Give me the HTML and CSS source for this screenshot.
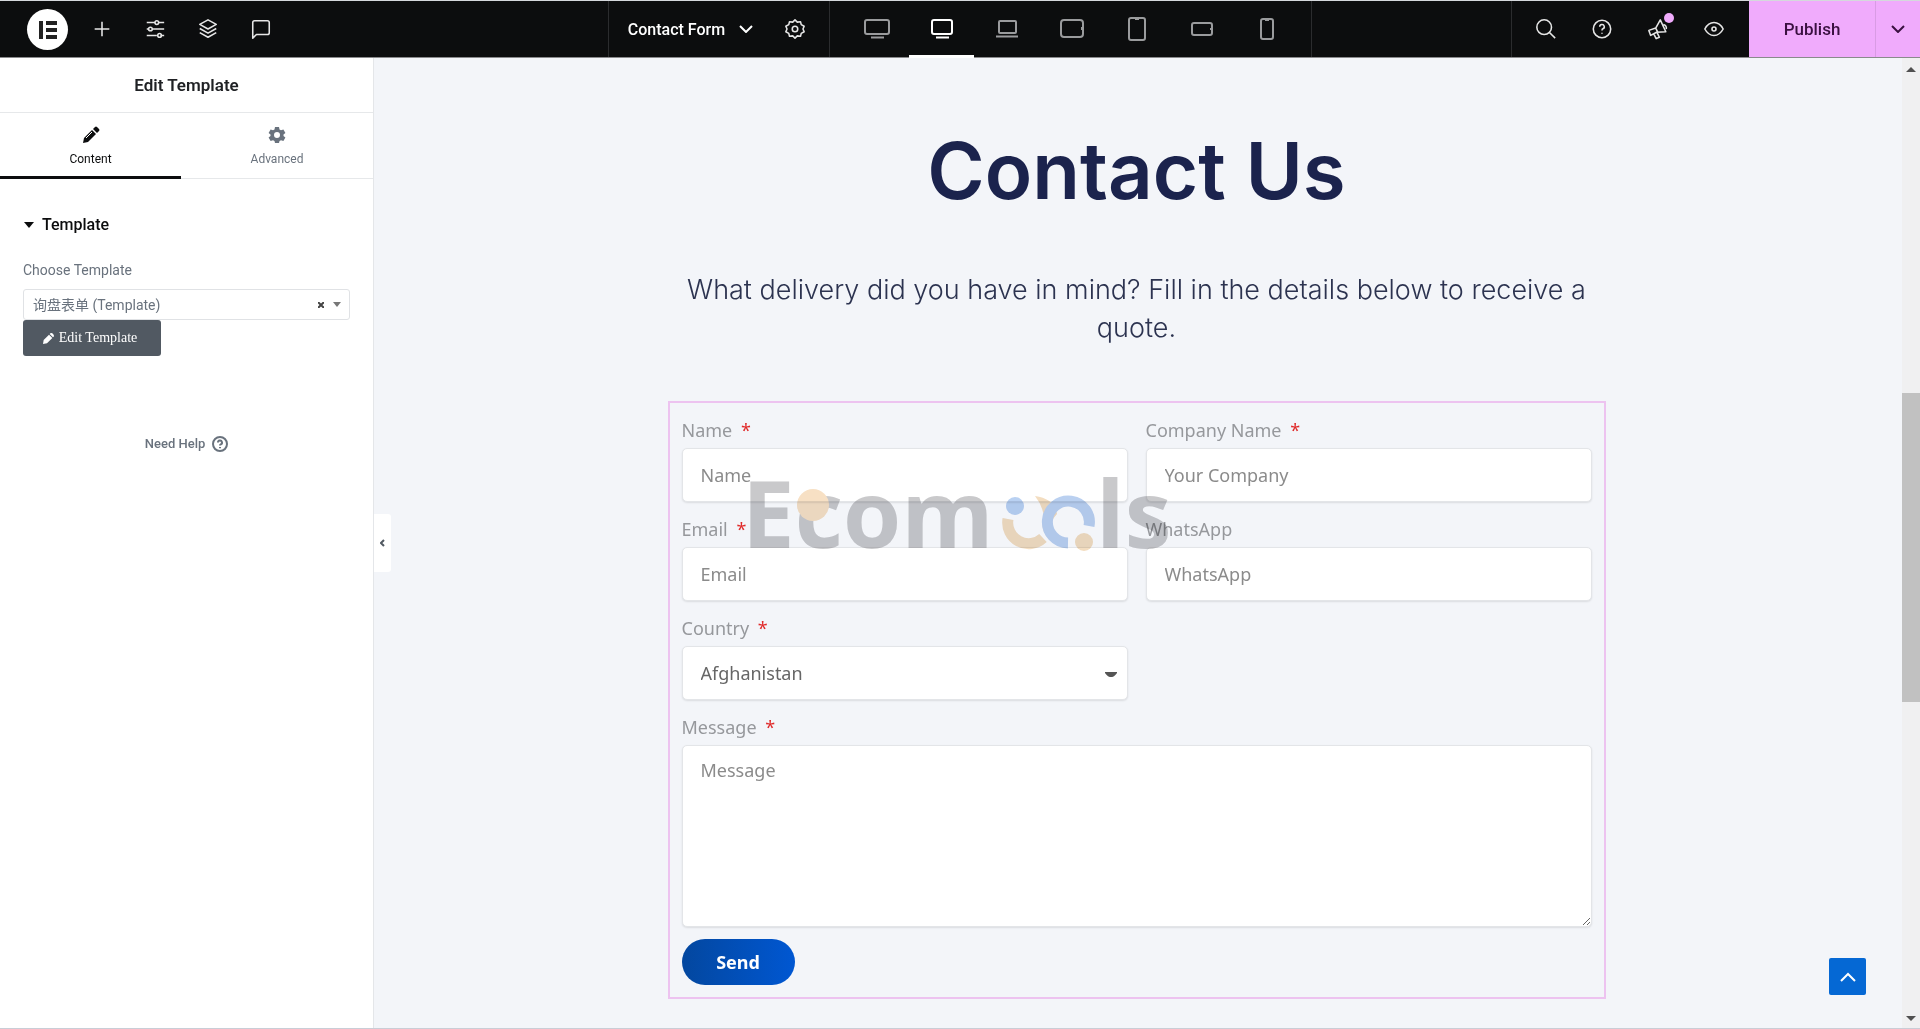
FILE: index.html
```html
<!DOCTYPE html>
<html lang="en">
<head>
<meta charset="utf-8">
<title>Contact Form</title>
<link rel="stylesheet" href="styles.css">
</head>
<body>
<header class="topbar">
  <div class="bar-left">
    <button class="logo" aria-label="Menu"><svg width="18" height="18" viewBox="0 0 18 18"><path fill="#222" d="M0 0h4v18H0zM7 0h11v4H7zM7 7h11v4H7zM7 14h11v4H7z"/></svg></button>
    <button class="tool" aria-label="Add"><svg class="ico" viewBox="0 0 24 24"><path d="M12 4v16M4 12h16"/></svg></button>
    <button class="tool" aria-label="Site settings"><svg class="ico" viewBox="0 0 24 24"><path d="M3 5h9M16 5h6M3 12h2M9 12h13M3 19h11M18 19h4"/><circle cx="14" cy="5" r="2"/><circle cx="7" cy="12" r="2"/><circle cx="17" cy="19" r="2"/></svg></button>
    <button class="tool" aria-label="Structure"><svg class="ico" viewBox="0 0 24 24"><path d="M12 2l9 5-9 5-9-5zM3 11.500l9 5 9-5M3 16l9 5 9-5"/></svg></button>
    <button class="tool" aria-label="Notes"><svg class="ico" viewBox="0 0 24 24"><path d="M3 22V5a2 2 0 0 1 2-2h14a2 2 0 0 1 2 2v11a2 2 0 0 1-2 2H7z"/></svg></button>
  </div>
  <div class="bar-center">
    <div class="doc">
      <button class="doc-name">Contact Form <svg class="chev" viewBox="0 0 14 8"><path d="M1 1l6 6 6-6"/></svg></button>
      <button class="gear" aria-label="Page settings"><svg class="ico" viewBox="0 0 24 24"><path d="M12 2l2.500 2.500 3.500-.5.800 3.200L22 9l-1.300 3L22 15l-3.200 1.800L18 20l-3.500-.5L12 22l-2.500-2.500L6 20l-.8-3.200L2 15l1.300-3L2 9l3.200-1.800L6 4l3.500.5z"/><circle cx="12" cy="12" r="3"/></svg></button>
    </div>
    <div class="devices">
      <button class="device" aria-label="Widescreen"><svg width="26" height="20" viewBox="0 0 26 20"><rect x="1" y="1" width="24" height="14" rx="2"/><path d="M7 18.500h13"/></svg></button>
      <button class="device active" aria-label="Desktop"><svg width="22" height="20" viewBox="0 0 22 20"><rect x="1" y="1" width="20" height="14" rx="2"/><path d="M5 18.500h13"/></svg></button>
      <button class="device" aria-label="Laptop"><svg width="22" height="18" viewBox="0 0 22 18"><rect x="3" y="1" width="17" height="12" rx="1"/><path d="M0 16.500h22"/></svg></button>
      <button class="device" aria-label="Tablet landscape"><svg width="24" height="20" viewBox="0 0 24 20"><rect x="1" y="1" width="22" height="17" rx="3"/><path d="M22 8v3"/></svg></button>
      <button class="device" aria-label="Tablet portrait"><svg width="18" height="25" viewBox="0 0 18 25"><rect x="1" y="1" width="16" height="22" rx="2"/><path d="M7 2h4"/></svg></button>
      <button class="device" aria-label="Mobile landscape"><svg width="22" height="14" viewBox="0 0 22 14"><rect x="1" y="1" width="20" height="12" rx="2"/><path d="M20 6v2"/></svg></button>
      <button class="device" aria-label="Mobile portrait"><svg width="14" height="22" viewBox="0 0 14 22"><rect x="1" y="1" width="12" height="20" rx="2"/><path d="M5 2h4"/></svg></button>
    </div>
  </div>
  <div class="bar-right">
    <div class="utils">
      <button class="util" aria-label="Finder"><svg class="ico" viewBox="0 0 24 24"><circle cx="10" cy="10" r="8"/><path d="M15.500 15.500L22 22"/></svg></button>
      <button class="util" aria-label="Help"><svg class="ico" viewBox="0 0 24 24"><circle cx="12" cy="12" r="9.500"/><path d="M9.500 9.500a2.500 2.500 0 1 1 3.500 2.300c-.7.300-1 .7-1 1.700M12 16v1.200"/></svg></button>
      <button class="util" aria-label="What's new"><svg class="ico" viewBox="0 0 24 24"><path d="M2 13.500l7.500-2.500L14.500 2l6 13-10 .5L4 19zM9.500 11l2.500 5M7.500 17.500l2.500 5 3.500-1.500-2.500-5M18 7a4 4 0 0 1 3 5"/></svg><span class="dot"></span></button>
      <button class="util" aria-label="Preview"><svg class="ico" viewBox="0 0 24 24"><path d="M2 12c2.500-4.700 6-7 10-7s7.500 2.300 10 7c-2.500 4.700-6 7-10 7s-7.500-2.300-10-7z"/><circle cx="12" cy="12" r="2.200"/></svg></button>
    </div>
    <button class="publish">Publish</button>
    <button class="publish-more" aria-label="Save options"><svg class="chev" viewBox="0 0 14 8"><path d="M1 1l6 6 6-6"/></svg></button>
  </div>
</header>
<div class="workspace">
  <aside class="panel">
    <h2 class="panel-title">Edit Template</h2>
    <nav class="tabs">
      <button class="tab active"><svg width="18" height="18" viewBox="0 0 18 18"><path fill="currentColor" d="M1 17l1-5 8-8 4 4-8 8zM11 3l2-2q1-1 2 0l2 2q1 1 0 2l-2 2z"/><path stroke="#fff" d="M4 12l6-6"/></svg>Content</button>
      <button class="tab"><svg width="18" height="18" viewBox="0 0 18 18"><path fill="currentColor" fill-rule="evenodd" d="M7 1h4l.5 2.500 1.500.8 2.400-.8 2 3.400L15.500 8.500v1.500l1.900 1.600-2 3.400-2.400-.8-1.500.8L11 17H7l-.5-2-1.500-.8-2.400.8-2-3.400L2.500 10V8.500L.6 6.900l2-3.400 2.400.8 1.500-.8zM9 6a3 3 0 1 0 0 6 3 3 0 0 0 0-6z"/></svg>Advanced</button>
    </nav>
    <section class="controls">
      <button class="section-head"><svg width="10" height="6" viewBox="0 0 10 6"><path fill="currentColor" d="M0 0h10L5 6z"/></svg>Template</button>
      <label class="control-label" for="tpl">Choose Template</label>
      <div class="picker">
        <select id="tpl"><option>询盘表单 (Template)</option></select>
        <div class="picker-marks"><svg width="6" height="6" viewBox="0 0 6 6"><path stroke="#444" stroke-width="2" d="M0 0l6 6M6 0L0 6"/></svg><svg width="8" height="5" viewBox="0 0 8 5"><path fill="#777" d="M0 0h8L4 5z"/></svg></div>
      </div>
      <button class="edit-btn"><svg width="12" height="12" viewBox="0 0 18 18"><path fill="currentColor" d="M0 18l1-6 8-8 5 5-8 8zM10 3l1-1q1-1 3 0l2 2q1 2 0 3l-1 1z"/></svg>Edit Template</button>
    </section>
    <a class="help" href="#help">Need Help <svg width="16" height="16" viewBox="0 0 16 16"><circle cx="8" cy="8" r="7"/><path d="M6 6.500a2 2 0 1 1 2.800 1.800Q8 8.700 8 9.500M8 11v1.200"/></svg></a>
  </aside>
  <main class="canvas">
    <button class="collapse" aria-label="Hide panel"><svg width="5" height="8" viewBox="0 0 5 8"><path d="M4 1L1 4l3 3"/></svg></button>
    <div class="content">
      <h1>Contact Us</h1>
      <p class="lead">What delivery did you have in mind? Fill in the details below to receive a quote.</p>
      <form class="form">
        <div class="field"><label for="name">Name <span class="req">*</span></label><input id="name" type="text" placeholder="Name"></div>
        <div class="field"><label for="company">Company Name <span class="req">*</span></label><input id="company" type="text" placeholder="Your Company"></div>
        <div class="field"><label for="email">Email <span class="req">*</span></label><input id="email" type="email" placeholder="Email"></div>
        <div class="field"><label for="wa">WhatsApp</label><input id="wa" type="text" placeholder="WhatsApp"></div>
        <div class="field"><label for="country">Country <span class="req">*</span></label>
          <div class="select-wrap"><select id="country"><option>Afghanistan</option></select><svg width="12" height="6" viewBox="0 0 12 6"><path fill="#555" d="M0 0h12v1Q9 5 7 5H5Q3 5 0 1z"/></svg></div></div>
        <div class="field wide"><label for="msg">Message <span class="req">*</span></label><textarea id="msg" placeholder="Message"></textarea></div>
        <button class="send" type="button">Send</button>
        <svg class="watermark" width="430" height="90" viewBox="0 0 430 90">
          <g class="wm-text"><text x="-1" y="79">Ecom</text><text x="353" y="79">ls</text></g>
          <g fill="none" stroke-width="11">
            <path stroke="#f3ddc0" d="M265 50A21 21 0 0 0 300 69"/>
            <path fill="#f3ddc0" d="M292 27q20 3 22 18q-8 8-9 22q-8-5-4-18q-1-12-9-22z"/>
            <path stroke="#bad0f0" d="M346 57A21 21 0 1 0 325 74"/>
          </g>
          <circle cx="70" cy="36" r="16" fill="#f7e0c4"/>
          <circle cx="272" cy="37" r="9" fill="#b9d1f2"/>
          <circle cx="341" cy="73" r="9" fill="#f3ddc0"/>
        </svg>
      </form>
    </div>
    <button class="to-top" aria-label="Back to top"><svg width="16" height="10" viewBox="0 0 16 10"><path d="M1 9l7-7 7 7"/></svg></button>
  </main>
  <div class="scrollbar">
    <svg width="10" height="5" viewBox="0 0 10 5"><path fill="#505050" d="M0 5h10L5 0z"/></svg>
    <div class="track"><div class="thumb"></div></div>
    <svg width="10" height="5" viewBox="0 0 10 5"><path fill="#505050" d="M0 0h10L5 5z"/></svg>
  </div>
</div>
</body>
</html>
```
FILE: styles.css
```css
* { box-sizing: border-box; }
body {
  margin: 0;
  min-height: 100vh;
  display: flex;
  flex-direction: column;
  font-family: Roboto, "Noto Sans CJK SC", sans-serif;
  background: #f3f5f9;
}
button { border: 0; padding: 0; background: none; font: inherit; color: inherit; cursor: pointer; }
svg { display: block; flex: none; }

/* Top bar */
.topbar {
  height: 58px;
  flex: none;
  display: grid;
  grid-template-columns: 1fr auto 1fr;
  background: #0c0d0e;
  color: #fff;
  border-top: 1px solid #d5d8dc;
  border-bottom: 1px solid #8a8a8c;
}
.bar-left, .bar-center, .doc, .devices, .bar-right, .utils { display: flex; align-items: stretch; }
.topbar button { display: flex; align-items: center; justify-content: center; }
.ico { width: 22px; height: 22px; fill: none; stroke: #e6e6e6; stroke-width: 1.7; stroke-linejoin: round; }
.topbar .logo { width: 41px; height: 41px; margin: 8px 7px 7px 27px; border-radius: 50%; background: #fff; }
.tool { width: 53px; }
.bar-center { border-left: 1px solid #2b2c2e; border-right: 1px solid #2b2c2e; }
.doc { border-right: 1px solid #2b2c2e; padding: 0 18px 0 19px; gap: 26px; }
.doc-name { gap: 14px; font-size: 16px; font-weight: 500; white-space: nowrap; }
.chev { width: 14px; height: 8px; fill: none; stroke: currentColor; stroke-width: 2; }
.gear { width: 32px; }
.devices { padding: 0 12px 0 14px; }
.device { width: 65px; }
.device svg { fill: none; stroke: #9a9b9d; stroke-width: 2; }
.device.active { box-shadow: inset 0 -2px #fff, 0 1px #fff; }
.device.active svg { stroke: #fff; }
.bar-right { justify-content: flex-end; }
.utils { border-left: 1px solid #2b2c2e; padding: 0 7px 0 6px; }
.util { width: 56px; position: relative; }
.dot { position: absolute; top: 12px; right: 12px; width: 10px; height: 10px; border-radius: 50%; background: #f0abfc; }
.publish, .publish-more { background: #f0abfc; color: #3a1040; }
.topbar .publish { width: 127px; font-size: 17px; font-weight: 500; border-right: 1px solid #d99be4; }
.publish-more { width: 44px; }

/* Editor panel */
.workspace { flex: 1; display: flex; border-bottom: 1px solid #c9cdd6; }
.panel { flex: none; width: 374px; background: #fff; border-right: 1px solid #e4e6e9; color: #69727d; }
.panel-title { margin: 0; height: 55px; line-height: 54px; border-bottom: 1px solid #e6e8ea; text-align: center; font-size: 17px; font-weight: 600; color: #1f2124; }
.tabs { display: flex; height: 66px; }
.tab { flex: 1; display: flex; flex-direction: column; align-items: center; justify-content: center; gap: 7px; font-size: 12px; line-height: 16px; border-bottom: 1px solid #e6e8ea; padding-top: 2px; }
.tab.active { flex: none; width: 181px; border-bottom: 3px solid #0c0d0e; color: #0c0d0e; padding-top: 4px; }
.controls { padding: 34px 23px 0; display: flex; flex-direction: column; align-items: flex-start; }
.section-head { display: flex; align-items: center; gap: 8px; padding-left: 1px; font-size: 16px; line-height: 24px; font-weight: 500; color: #0c0d0e; }
.control-label { margin-top: 23px; font-size: 14px; line-height: 20px; }
.picker { position: relative; width: 100%; margin-top: 9px; }
.picker select { appearance: none; display: block; width: 100%; height: 31px; padding: 0 36px 0 9px; border: 1px solid #e0e2e5; border-radius: 3px; background: #fff; color: #69727d; font: inherit; font-size: 14px; }
.picker-marks { position: absolute; inset: 0 9px 0 auto; display: flex; align-items: center; gap: 9px; pointer-events: none; }
.edit-btn { display: flex; align-items: center; justify-content: center; gap: 4px; width: 138px; height: 36px; padding-right: 4px; border-radius: 3px; background: #515962; color: #fff; font-family: "Liberation Serif", serif; font-size: 14px; }
.help { display: flex; align-items: center; justify-content: center; gap: 7px; margin-top: 78px; font-size: 13px; line-height: 20px; font-weight: 500; color: #69727d; text-decoration: none; }
.help svg { fill: none; stroke: currentColor; stroke-width: 2; }

/* Canvas */
.canvas { flex: 1; position: relative; padding-right: 3px; }
.collapse { position: absolute; left: 0; top: 456px; width: 17px; height: 58px; display: flex; align-items: center; justify-content: center; background: #fff; border-radius: 0 3px 3px 0; }
.collapse svg, .to-top svg { fill: none; stroke: #515962; stroke-width: 2; }
.content { width: 938px; max-width: 100%; margin: 0 auto; padding: 64px 0 24px; font-family: "Noto Sans", sans-serif; }
h1 { margin: 0; text-align: center; font-family: Inter, sans-serif; font-size: 78px; line-height: 98px; font-weight: 600; color: #1b234d; }
.lead { margin: 51px 0 0; padding: 0 10px; text-align: center; font-family: Inter, sans-serif; font-size: 27px; line-height: 38px; font-weight: 300; color: #2c3350; }
.form { position: relative; margin-top: 54px; padding: 12px; border: 2px solid #edc3f0; display: grid; grid-template-columns: 1fr 1fr; gap: 12px 18px; }
.field { display: flex; flex-direction: column; gap: 3px; font-size: 18px; line-height: 28px; }
.wide { grid-column: 1 / -1; }
.field label { color: #96989c; line-height: 30px; }
.req { margin-left: 4px; color: #e02b2b; }
.field input, .field select, .field textarea { display: block; width: 100%; height: 54px; margin: 0; padding: 0 18px; border: 1px solid #e3e5e8; border-radius: 5px; background: #fff; box-shadow: 0 1px 2px #0000001a; font: inherit; color: #666; }
.field ::placeholder { color: #8b8b8b; opacity: 1; }
.field select { appearance: none; }
.field textarea { height: 182px; padding: 10px 18px; resize: vertical; }
.select-wrap { position: relative; }
.select-wrap svg { position: absolute; right: 11px; top: 26px; pointer-events: none; }
.send { width: 113px; height: 46px; border-radius: 23px; background: linear-gradient(90deg, #03479f, #0057d2); color: #fff; font-size: 18px; font-weight: 700; }
.watermark { position: absolute; left: 73px; top: 66px; overflow: visible; pointer-events: none; mix-blend-mode: multiply; }
.wm-text { font-family: "Open Sans", sans-serif; font-weight: 700; font-size: 94px; fill: #c9c9cb; }
.to-top { position: absolute; right: 36px; bottom: 33px; width: 37px; height: 37px; display: flex; align-items: center; justify-content: center; border-radius: 2px; background: #0568d4; }
.to-top svg { stroke: #fff; }
.scrollbar { flex: none; width: 18px; display: flex; flex-direction: column; align-items: center; background: #f0f0f1; padding: 9px 0 7px; }
.track { flex: 1; width: 100%; display: flex; flex-direction: column; }
.track::before { content: ""; flex: 321; }
.thumb { flex: 310; background: #c1c1c1; }
.track::after { content: ""; flex: 314; }
```
